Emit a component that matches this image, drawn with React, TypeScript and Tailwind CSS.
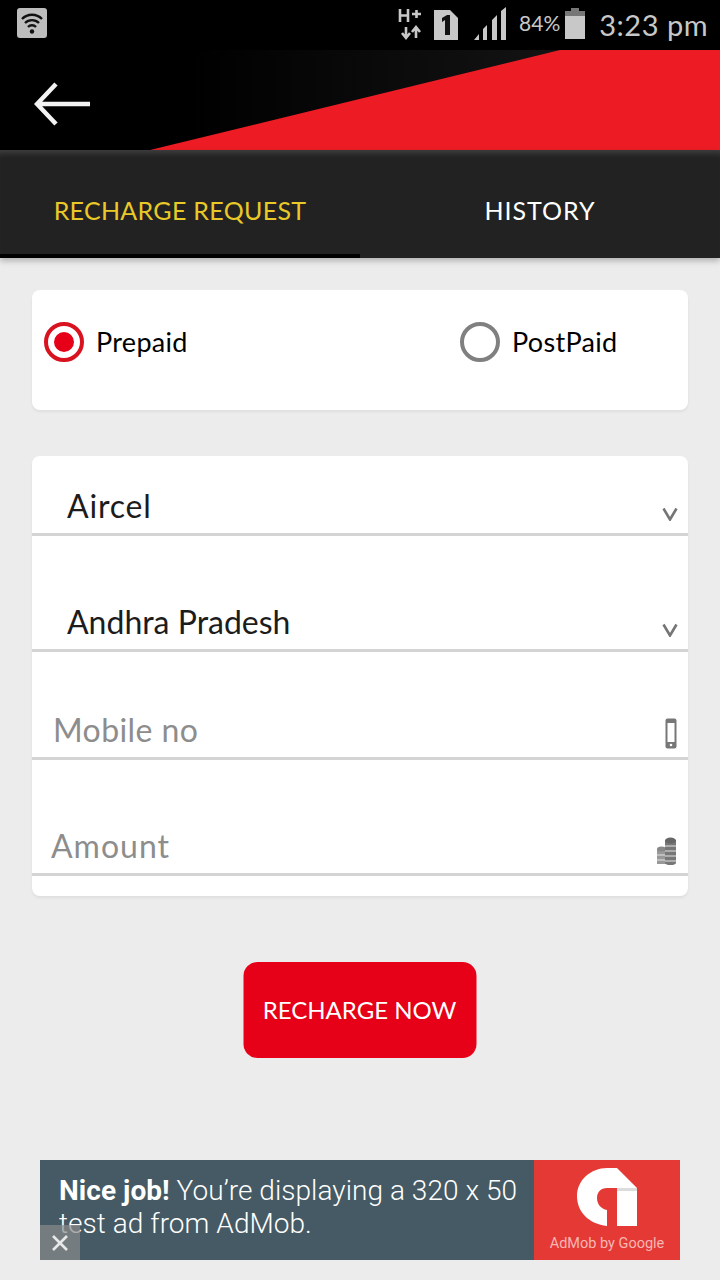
import React from 'react';

const hand = "font-['Lato','Noto_Sans',sans-serif]";

const StatusBar = () => (
  <div className="h-[50px] bg-black flex items-start justify-between pl-[17px] pr-[12px] pt-[8px]">
    <svg width="30" height="30" viewBox="0 0 30 30">
      <rect x="0" y="0" width="30" height="30" rx="3" fill="#bdbdbd" />
      <path d="M5 11 A14 14 0 0 1 25 11" fill="none" stroke="#111" strokeWidth="2.4" />
      <path d="M8 15 A10 10 0 0 1 22 15" fill="none" stroke="#111" strokeWidth="2.4" />
      <path d="M11 19 A5.5 5.5 0 0 1 19 19" fill="none" stroke="#111" strokeWidth="2.4" />
      <circle cx="15" cy="23.5" r="2.2" fill="#111" />
    </svg>
    <div className="flex items-start">
      <svg width="28" height="34" viewBox="0 0 28 34" className="mr-[8px]">
        <path d="M3 1v13M11 1v13M3 7.5h8M15 6h9M19.5 2v8" fill="none" stroke="#c8c8c8" strokeWidth="2.6" />
        <path d="M9 19v10M5 25l4 5 4-5" fill="none" stroke="#c8c8c8" strokeWidth="2.6" />
        <path d="M19 30V20M15 24l4-5 4 5" fill="none" stroke="#c8c8c8" strokeWidth="2.6" />
      </svg>
      <svg width="26" height="32" viewBox="0 0 26 32" className="mr-[14px] mt-[1px]">
        <path d="M1 1h16l8 8v22H1z" fill="#c8c8c8" />
        <path d="M9 9l5-3h3v20h-5V11l-3 2z" fill="#111" />
      </svg>
      <svg width="34" height="34" viewBox="0 0 34 34" className="mr-[12px] -mt-[1px]">
        <path d="M1 33l5-6v6zM10 33V22l4-4v15zM19 33V13l5-5v25zM28 33V4l5-4v33z" fill="#c8c8c8" />
      </svg>
      <span className={`${hand} text-[21px] leading-[34px] text-[#c8c8c8] mr-[4px] -mt-[2px]`}>84%</span>
      <svg width="22" height="32" viewBox="0 0 22 32" className="mr-[13px]">
        <rect x="7" y="0" width="8" height="4" fill="#777" />
        <rect x="1" y="3" width="20" height="5" fill="#777" />
        <rect x="1" y="8" width="20" height="23" fill="#c8c8c8" />
      </svg>
      <span className={`${hand} text-[29px] leading-[36px] text-[#c8c8c8] tracking-[0.5px] -mt-[1px]`}>3:23 pm</span>
    </div>
  </div>
);

const HeaderBand = () => (
  <div className="relative h-[100px] bg-black flex items-center pl-[34px] pt-[8px]">
    <svg className="absolute inset-0" width="720" height="100" viewBox="0 0 720 100">
      <defs>
        <linearGradient id="band" x1="0" x2="1" y1="0" y2="0">
          <stop offset="0" stopColor="#000" />
          <stop offset="1" stopColor="#141414" />
        </linearGradient>
      </defs>
      <rect x="190" y="0" width="380" height="100" fill="url(#band)" />
      <path d="M150 100L560 0H720V100Z" fill="#ed1c24" />
    </svg>
    <svg width="58" height="46" viewBox="0 0 58 46" className="relative">
      <path d="M56 23H4M22 3L3 23l19 20" fill="none" stroke="#f2f2f2" strokeWidth="4.5" />
    </svg>
  </div>
);

const Tabs = () => (
  <div className="h-[108px] bg-[#222223] flex shadow-[0_3px_6px_rgba(0,0,0,0.25),inset_0_7px_6px_-4px_rgba(255,255,255,0.14)] relative">
    <div className="w-1/2 flex items-center justify-center border-b-[4px] border-black pt-[18px]">
      <span className={`${hand} text-[25px] text-[#e9c928] tracking-[0.3px]`}>RECHARGE REQUEST</span>
    </div>
    <div className="w-1/2 flex items-center justify-center pt-[14px]">
      <span className={`${hand} text-[25px] text-white tracking-[1px]`}>HISTORY</span>
    </div>
  </div>
);

const Radio = ({ label, checked }: { label: string; checked?: boolean }) => (
  <div className="flex items-center gap-[12px]">
    <div
      className={`w-[40px] h-[40px] rounded-full border-[4px] flex items-center justify-center ${
        checked ? 'border-[#d9121f]' : 'border-[#808080]'
      }`}
    >
      {checked && <div className="w-[20px] h-[20px] rounded-full bg-[#e60018]" />}
    </div>
    <span className={`${hand} text-[27px] text-black tracking-[0.3px]`}>{label}</span>
  </div>
);

const Chevron = () => (
  <svg width="16" height="14" viewBox="0 0 16 14">
    <path d="M1.5 1.5L8 12.5L14.5 1.5" fill="none" stroke="#757575" strokeWidth="2.6" />
  </svg>
);

const PhoneIcon = () => (
  <svg width="12" height="31" viewBox="0 0 12 31">
    <rect x="0.5" y="0.5" width="11" height="30" rx="2" fill="#777" />
    <rect x="2.5" y="5" width="7" height="19" fill="#fff" />
    <circle cx="6" cy="27" r="1.3" fill="#fff" />
  </svg>
);

const CoinsIcon = () => (
  <svg width="20" height="28" viewBox="0 0 20 28">
    <path d="M0 12h9v15H0z" fill="#999" />
    <ellipse cx="4.5" cy="12" rx="4.5" ry="2.5" fill="#888" />
    <path d="M8 3h11v23H8z" fill="#777" />
    <ellipse cx="13.5" cy="3.5" rx="5.5" ry="3" fill="#666" />
    <ellipse cx="13.5" cy="26" rx="5.5" ry="2" fill="#777" />
    <path d="M8 9h11M8 14h11M8 19h11M8 24h11M0 18h8M0 23h8" stroke="#e4e4e4" strokeWidth="1" />
  </svg>
);

const Field = ({
  height,
  text,
  textClass,
  icon,
  iconPad,
}: {
  height: string;
  text: string;
  textClass: string;
  icon: React.ReactNode;
  iconPad: string;
}) => (
  <div className={`${height} border-b-[3px] border-[#d4d4d4] flex items-end justify-between`}>
    <span className={`${hand} ${textClass} leading-[40px] mb-[7px]`}>{text}</span>
    <div className={iconPad}>{icon}</div>
  </div>
);

const AdBanner = () => (
  <div className="relative mx-[40px] h-[100px] flex bg-[#455a64]">
    <div className="flex-1 pl-[19px] pt-[14px] font-['Roboto',sans-serif] font-light text-[28px] tracking-[0.05px] leading-[33px] text-white">
      <span className="font-bold">Nice job!</span> You’re displaying a 320 x 50
      <br />
      test ad from AdMob.
    </div>
    <div className="w-[146px] bg-[#e53935] flex flex-col items-center pt-[8px]">
      <svg width="60" height="58" viewBox="0 0 60 58">
        <path
          d="M60 58H40V20H30C24 20 20 24 20 30C20 36 24 41 30 42V58C12 56 0 44 0 28C0 12 14 0 30 0H40L60 20Z"
          fill="#fff"
        />
        <path d="M40 20H60V23H40Z" fill="#dcdcdc" />
      </svg>
      <span className="font-['Roboto',sans-serif] text-[14.5px] leading-[18px] text-[#f6b7b4] mt-[9px]">AdMob by Google</span>
    </div>
    <div className="absolute left-0 bottom-0 w-[40px] h-[35px] bg-[#8a8a8a]/70 flex items-center justify-center">
      <svg width="18" height="18" viewBox="0 0 18 18">
        <path d="M2 2L16 16M16 2L2 16" stroke="#e8e8e8" strokeWidth="2.6" />
      </svg>
    </div>
  </div>
);

export default function App() {
  return (
    <div className="w-[720px] h-[1280px] bg-[#ececec] flex flex-col overflow-hidden">
      <StatusBar />
      <HeaderBand />
      <Tabs />
      <div className="mx-[32px] mt-[32px] h-[120px] bg-white rounded-[8px] shadow-[0_2px_3px_rgba(0,0,0,0.06)] flex items-start pt-[32px] pl-[12px]">
        <div className="w-[416px]">
          <Radio label="Prepaid" checked />
        </div>
        <Radio label="PostPaid" />
      </div>
      <div className="mx-[32px] mt-[46px] h-[440px] bg-white rounded-[8px] shadow-[0_2px_3px_rgba(0,0,0,0.06)] flex flex-col">
        <Field
          height="h-[80px]"
          text="Aircel"
          textClass="pl-[35px] text-[32px] text-[#1c1c1c] tracking-[0.8px]"
          icon={<Chevron />}
          iconPad="pr-[10px] mb-[12px]"
        />
        <Field
          height="h-[116px]"
          text="Andhra Pradesh"
          textClass="pl-[35px] text-[32px] text-[#1c1c1c]"
          icon={<Chevron />}
          iconPad="pr-[10px] mb-[12px]"
        />
        <Field
          height="h-[108px]"
          text="Mobile no"
          textClass="pl-[21px] text-[32px] text-[#8d8d8d] tracking-[0.4px]"
          icon={<PhoneIcon />}
          iconPad="pr-[11px] mb-[8px]"
        />
        <Field
          height="h-[116px]"
          text="Amount"
          textClass="pl-[19px] text-[32px] text-[#8d8d8d] tracking-[1px]"
          icon={<CoinsIcon />}
          iconPad="pr-[11px] mb-[8px]"
        />
      </div>
      <div className="mt-[66px] flex justify-center">
        <button className={`${hand} w-[233px] h-[96px] -translate-x-[0.5px] bg-[#e60018] rounded-[14px] text-white text-[24px]`}>
          RECHARGE NOW
        </button>
      </div>
      <div className="mt-[102px]">
        <AdBanner />
      </div>
    </div>
  );
}
